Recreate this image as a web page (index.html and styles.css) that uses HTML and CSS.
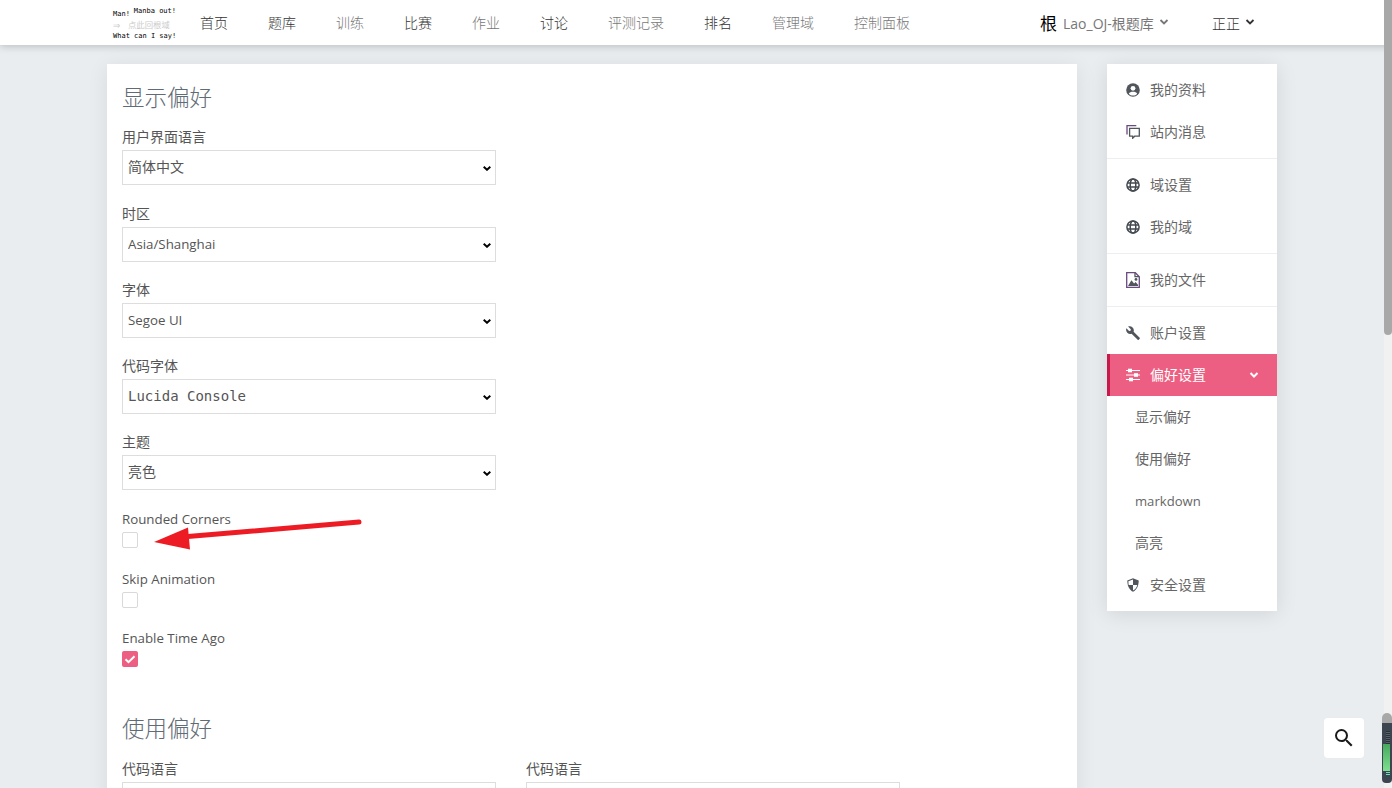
FILE: index.html
```html
<!DOCTYPE html>
<html lang="zh-CN">
<head>
<meta charset="utf-8">
<title>偏好设置</title>
<link rel="stylesheet" href="styles.css">
</head>
<body>
<header class="topbar">
  <div class="logo">
    <div class="logo-line logo-first"><span class="logo-man">Man!</span><span class="logo-manba">Manba out!</span></div>
    <div class="logo-line logo-link"><span class="logo-arrow">⇒</span><span>点此回根域</span></div>
    <div class="logo-line">What can I say!</div>
  </div>
  <nav class="nav">
    <a class="nav-item">首页</a>
    <a class="nav-item">题库</a>
    <a class="nav-item nav-muted">训练</a>
    <a class="nav-item">比赛</a>
    <a class="nav-item nav-muted">作业</a>
    <a class="nav-item">讨论</a>
    <a class="nav-item nav-muted">评测记录</a>
    <a class="nav-item">排名</a>
    <a class="nav-item nav-muted">管理域</a>
    <a class="nav-item nav-muted">控制面板</a>
  </nav>
  <div class="domain">
    <span class="domain-mark">根</span>
    <span class="domain-name">Lao_OJ-根题库</span>
    <svg class="chev" viewBox="0 0 10 6"><path d="M1.500 1l3.500 3.500L8.500 1" /></svg>
  </div>
  <div class="user">
    <span>正正</span>
    <svg class="chev chev-dark" viewBox="0 0 10 6"><path d="M1.500 1l3.500 3.500L8.500 1" /></svg>
  </div>
</header>

<div class="page">
  <main class="card">
    <h2 class="section-title">显示偏好</h2>
    <div class="field">
      <label class="field-label">用户界面语言</label>
      <select class="select"><option>简体中文</option></select>
    </div>
    <div class="field">
      <label class="field-label">时区</label>
      <select class="select select-latin"><option>Asia/Shanghai</option></select>
    </div>
    <div class="field">
      <label class="field-label">字体</label>
      <select class="select select-latin"><option>Segoe UI</option></select>
    </div>
    <div class="field">
      <label class="field-label">代码字体</label>
      <select class="select select-mono"><option>Lucida Console</option></select>
    </div>
    <div class="field">
      <label class="field-label">主题</label>
      <select class="select"><option>亮色</option></select>
    </div>
    <div class="check-field">
      <label class="field-label label-latin">Rounded Corners</label>
      <span class="checkbox"></span>
    </div>
    <div class="check-field">
      <label class="field-label label-latin">Skip Animation</label>
      <span class="checkbox"></span>
    </div>
    <div class="check-field">
      <label class="field-label label-latin">Enable Time Ago</label>
      <span class="checkbox checkbox-on">
        <svg viewBox="0 0 16 16"><path d="M3.500 8.200l3 3 6-6" /></svg>
      </span>
    </div>
    <h2 class="section-title section-second">使用偏好</h2>
    <div class="field-row">
      <div class="field">
        <label class="field-label">代码语言</label>
        <select class="select"><option></option></select>
      </div>
      <div class="field">
        <label class="field-label">代码语言</label>
        <select class="select"><option></option></select>
      </div>
    </div>
  </main>

  <aside class="side">
    <ul class="side-group">
      <li class="side-item">
        <svg class="side-icon" viewBox="0 0 14 14"><circle class="fill" cx="7" cy="7" r="6.800"/><circle class="cut" cx="7" cy="5.300" r="2.400"/><path class="cut" d="M2.800 10.700c.7-1.500 2.300-2 4.200-2s3.500.5 4.200 2C10.200 12 8.700 12.600 7 12.600s-3.200-.6-4.200-1.900z"/></svg>
        <span>我的资料</span>
      </li>
      <li class="side-item">
        <svg class="side-icon" viewBox="0 0 14 14"><path class="line line-purple" d="M1 9.500V.700h9.300"/><path class="line" d="M3.600 3.300h9.700v7.900H8.700l-2 2v-2H3.600z"/></svg>
        <span>站内消息</span>
      </li>
    </ul>
    <ul class="side-group">
      <li class="side-item">
        <svg class="side-icon" viewBox="0 0 14 14"><circle class="line line-heavy" cx="7" cy="7" r="6.100"/><ellipse class="line line-heavy" cx="7" cy="7" rx="2.800" ry="6.100"/><path class="line line-heavy" d="M1 4.900h12M1 9.100h12"/></svg>
        <span>域设置</span>
      </li>
      <li class="side-item">
        <svg class="side-icon" viewBox="0 0 14 14"><circle class="line line-heavy" cx="7" cy="7" r="6.100"/><ellipse class="line line-heavy" cx="7" cy="7" rx="2.800" ry="6.100"/><path class="line line-heavy" d="M1 4.900h12M1 9.100h12"/></svg>
        <span>我的域</span>
      </li>
    </ul>
    <ul class="side-group">
      <li class="side-item">
        <svg class="side-icon side-icon-tall" viewBox="0 0 14 16"><path class="line line-purple" d="M.700.700h8.600l4 4v10.600H.700z"/><path class="line" d="M9 .900v3.800h4"/><circle class="fill" cx="10" cy="7.400" r="1.400"/><path class="fill" d="M2 13.900l3.400-5.600 2.700 3.200 1.500-1.400 2.400 2.600v1.200z"/></svg>
        <span>我的文件</span>
      </li>
    </ul>
    <ul class="side-group side-last">
      <li class="side-item">
        <svg class="side-icon" viewBox="0 0 14 14"><path class="fill" d="M13.700 11.800L7.600 5.700c.5-1.500.2-3.100-1-4.300C5.400.2 3.600-.1 2.100.5l2.700 2.700-.2 1.500-1.500.2L.4 2.200c-.7 1.500-.3 3.300.9 4.500 1.200 1.200 2.800 1.500 4.300 1l6.100 6.100c.3.300.7.300 1 0l1-1c.3-.3.300-.7 0-1z"/></svg>
        <span>账户设置</span>
      </li>
      <li class="side-item side-active">
        <svg class="side-icon" viewBox="0 0 14 14"><path class="bars" d="M0 2.500h14M0 7h14M0 11.500h14"/><rect class="knob" x="2" y="0.700" width="4" height="3.600"/><rect class="knob" x="8" y="5.200" width="4" height="3.600"/><rect class="knob" x="3" y="9.700" width="4" height="3.600"/></svg>
        <span class="side-grow">偏好设置</span>
        <svg class="chev chev-white" viewBox="0 0 10 6"><path d="M1.500 1l3.500 3.500L8.500 1" /></svg>
      </li>
      <li class="side-item side-sub"><span>显示偏好</span></li>
      <li class="side-item side-sub"><span>使用偏好</span></li>
      <li class="side-item side-sub"><span class="side-latin">markdown</span></li>
      <li class="side-item side-sub"><span>高亮</span></li>
      <li class="side-item">
        <svg class="side-icon" viewBox="0 0 14 14"><path class="fill" d="M7 .2l5.700 2.200c0 5-1.600 9-5.700 11.400C2.900 11.400 1.300 7.400 1.300 2.400z"/><path class="cut" d="M7 1.600v5.500H2.700c-.2-1.100-.3-2.100-.3-3.900zM7 7.100h4.300c-.6 2.400-1.900 4.300-4.300 5.300z"/></svg>
        <span>安全设置</span>
      </li>
    </ul>
  </aside>
</div>

<svg class="arrow" viewBox="0 0 220 40"><path class="arrow-head" d="M2 29L36 14.500 38 36.500z"/><path class="arrow-shaft" d="M30 24L207 9"/></svg>

<button class="search-btn" type="button" aria-label="搜索">
  <svg viewBox="0 0 24 24"><path d="M15.500 14h-.79l-.28-.27A6.470 6.470 0 0 0 16 9.500 6.500 6.500 0 1 0 9.500 16c1.610 0 3.090-.59 4.230-1.570l.27.28v.79l5 4.990L20.490 19l-4.990-5zm-6 0C7.010 14 5 11.990 5 9.500S7.010 5 9.500 5 14 7.010 14 9.500 11.990 14 9.500 14z"/></svg>
</button>

<div class="scrollbar"><div class="scroll-thumb"></div></div>
<div class="widget"><div class="widget-top"></div><div class="widget-body"><div class="widget-lines"></div><div class="widget-green"></div><div class="widget-teal"></div></div></div>
</body>
</html>
```
FILE: styles.css
```css
* { box-sizing: border-box; }
html, body { margin: 0; height: 788px; overflow: hidden; }
body {
  position: relative;
  background: #e9edf0;
  color: #555;
  font-family: "Open Sans", "Noto Sans CJK SC", sans-serif;
  font-size: 14px;
}
ul { list-style: none; margin: 0; padding: 0; }

.topbar {
  display: flex;
  align-items: center;
  height: 45px;
  padding-left: 113px;
  background: #fff;
  box-shadow: 0 1px 8px rgba(0, 0, 0, .22);
  position: relative;
}
.logo {
  width: 67px;
  padding-top: 2px;
  font-family: "DejaVu Sans Mono", "Noto Sans CJK SC", monospace;
  font-size: 7px;
  line-height: 11px;
  color: #000;
  flex: none;
}
.logo-line { white-space: nowrap; }
.logo-first { display: flex; align-items: flex-start; }
.logo-man { margin-top: 3px; margin-right: 4px; }
.logo-link { display: flex; color: #ccc; font-size: 8.400px; }
.logo-arrow { width: 15px; font-size: 12px; }

.nav { display: flex; flex: none; }
.nav-item {
  padding: 0 20px;
  color: #333;
  line-height: 44px;
  font-weight: 300;
}
.nav-muted { color: #777; }

.domain {
  display: flex;
  align-items: center;
  margin-left: 110px;
  color: #777;
  flex: none;
  width: 172px;
}
.domain-mark { width: 23px; color: #000; font-size: 17px; }
.chev { width: 10px; height: 6px; fill: none; stroke: #777; stroke-width: 1.800; }
.domain .chev { margin-left: 5px; margin-top: -2px; }
.user { display: flex; align-items: center; color: #333; flex: none; font-weight: 300; }
.chev-dark { stroke: #333; margin-left: 5px; margin-top: -2px; }

.page {
  display: flex;
  align-items: flex-start;
  gap: 30px;
  padding: 19px 0 0 107px;
}
.card {
  width: 970px;
  height: 800px;
  flex: none;
  padding: 19px 15px 0;
  background: #fff;
  box-shadow: 0 3px 20px rgba(0, 0, 0, .08);
}
.section-title {
  margin: 0 0 15.450px;
  font-size: 22.500px;
  font-weight: 300;
  line-height: 30px;
  color: #5f6b75;
}
.section-second { margin: 46.700px 0 16px; }
.field { width: 374px; margin-bottom: 19.250px; }
.field-label { display: block; height: 19px; line-height: 18px; margin-bottom: 3px; }
.label-latin { height: 18px; line-height: 18px; margin-bottom: 4px; font-size: 13.300px; }
.select {
  display: block;
  width: 374px;
  height: 35px;
  padding: 0 20px 2px 5px;
  appearance: none;
  background: #fff url("data:image/svg+xml,%3Csvg xmlns='http://www.w3.org/2000/svg' width='8' height='5'%3E%3Cpath d='M.7.700L4 3.800 7.300.700' fill='none' stroke='%23000' stroke-width='1.900'/%3E%3C/svg%3E") no-repeat 360px 15px;
  border: 1px solid #ddd;
  border-radius: 0;
  color: #555;
  font-family: inherit;
  font-size: 14px;
}
.select-latin { padding-bottom: 0; font-size: 13.300px; }
.select-mono { font-family: "DejaVu Sans Mono", monospace; }
.check-field { margin-bottom: 21.850px; }
.checkbox {
  display: block;
  width: 16px;
  height: 16px;
  border: 1px solid #d9d9d9;
  border-radius: 2px;
  background: #fff;
}
.checkbox-on { border: 0; background: #ed5f82; }
.checkbox-on svg { display: block; width: 16px; height: 16px; fill: none; stroke: #fff; stroke-width: 2; }
.field-row { display: flex; gap: 30px; }

.side {
  width: 170px;
  flex: none;
  background: #fff;
  box-shadow: 0 3px 20px rgba(0, 0, 0, .1);
}
.side-group { padding: 5px 0; border-bottom: 1px solid #eceef0; }
.side-last { border-bottom: 0; }
.side-item {
  display: flex;
  align-items: center;
  height: 42px;
  padding-left: 19px;
  color: #666;
}
.side-item > span { margin-left: 10px; margin-bottom: 2px; }
.side-icon { display: block; width: 14px; height: 14px; flex: none; }
.side-icon-tall { height: 16px; }
.side-icon .fill { fill: #50565c; }
.side-icon .cut { fill: #fff; }
.side-icon .line { fill: none; stroke: #50565c; stroke-width: 1.300; }
.side-icon .line-heavy { stroke: #444a50; stroke-width: 1.500; }
.side-icon .line-purple { stroke: #6a4a80; }
.side-active { padding-left: 16px; border-left: 3px solid #c9184a; background: #ed5f82; color: #fff; }
.side-active .bars { fill: none; stroke: #fff; stroke-width: 1.200; }
.side-active .knob { fill: #fff; }
.side-active .side-grow { flex: 1; }
.chev-white { stroke: #fff; margin-right: 18px; stroke-width: 2; }
.side-sub { padding-left: 28px; }
.side-item.side-sub > span { margin-left: 0; }
.side-item.side-sub > .side-latin { margin-bottom: 0; font-size: 13.100px; }

.arrow { position: absolute; left: 152px; top: 513px; width: 220px; height: 40px; }
.arrow-head { fill: #ed1c24; }
.arrow-shaft { fill: none; stroke: #ed1c24; stroke-width: 5; stroke-linecap: round; }

.search-btn {
  position: absolute;
  left: 1324px;
  top: 718px;
  width: 40px;
  height: 40px;
  padding: 8px;
  border: 0;
  border-radius: 4px;
  background: #fff;
}
.search-btn svg { display: block; width: 24px; height: 24px; fill: #1a1a1a; }

.scrollbar { position: absolute; right: 0; top: 0; width: 8px; height: 788px; background: #f1f1f1; }
.scroll-thumb { width: 8px; height: 335px; background: #a8a8a8; border-radius: 0 0 4px 4px; }
.widget { position: absolute; left: 1382px; top: 713px; width: 10px; height: 70px; }
.widget-top { height: 10px; background: #a8a8a8; border-radius: 5px 5px 0 0; }
.widget-body { height: 60px; padding: 8px 0 0 1px; background: #3c4550; border-radius: 0 0 4px 4px; }
.widget-lines { width: 4px; height: 13px; margin-left: 3px; background: repeating-linear-gradient(#2a3138 0 1px, #58616a 1px 2px); }
.widget-green { width: 7px; height: 27px; background: linear-gradient(#47a95d, #7de08f); }
.widget-teal { width: 4px; height: 4px; margin: 1px 0 0 3px; background: repeating-linear-gradient(#6fdcc0 0 1px, #3c4550 1px 2px); }
```
